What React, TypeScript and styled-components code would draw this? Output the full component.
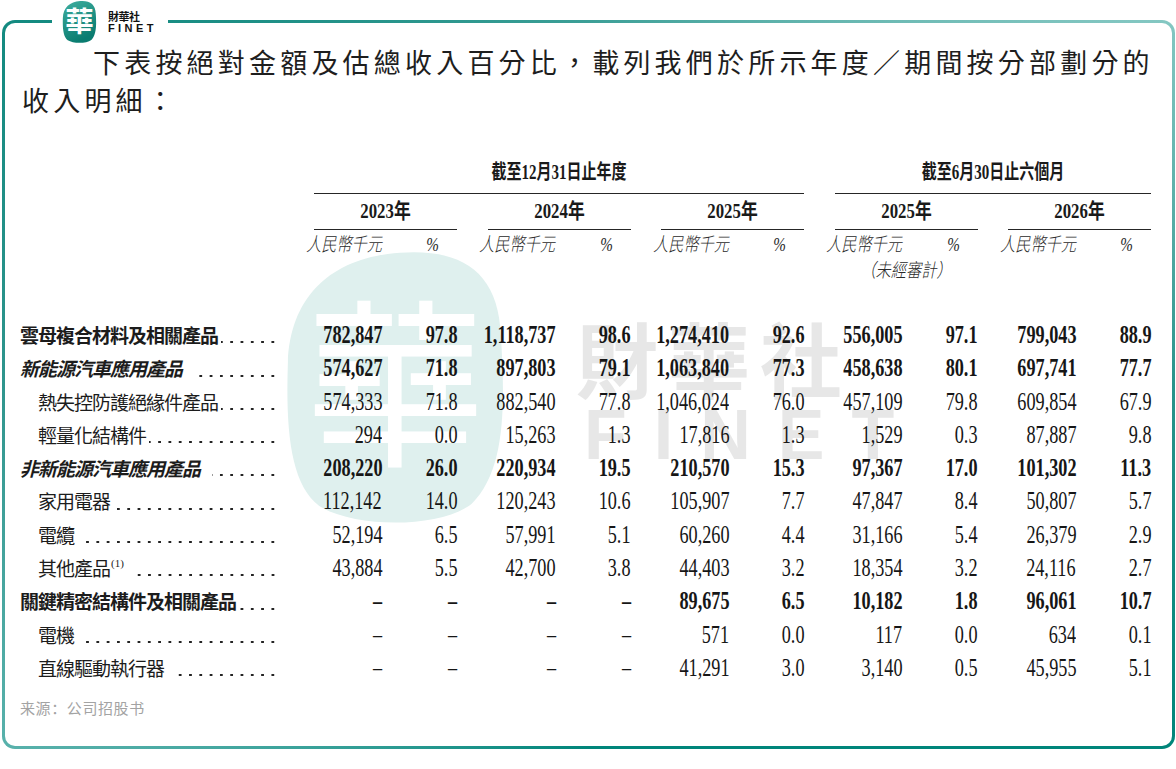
import React from "react";
import styled, { createGlobalStyle } from "styled-components";

const GlobalStyle = createGlobalStyle`
  html, body { margin: 0; padding: 0; background: #ffffff; }
  body { width: 1176px; height: 769px; overflow: hidden; }
`;

const serif = `"Liberation Serif", "Noto Sans CJK TC", serif`;
const cjk = `"Noto Sans CJK TC", "Noto Sans CJK SC", sans-serif`;
const COLS = "294px repeat(4, 68px 75px 30.5px) 68px 75px";

const Page = styled.div`
  padding: 20px 0 0 2px;
`;

const Frame = styled.div`
  position: relative;
  width: 1173px;
  height: 729px;
  box-sizing: border-box;
  padding: 3px;
  border-radius: 13px;
  background: conic-gradient(
    from 0deg at 50% 50%,
    #3c9f97 0deg,
    #84c7c2 58deg,
    #2a938b 90deg,
    #00857a 122deg,
    #00857a 180deg,
    #58b1ab 238deg,
    #2f958d 270deg,
    #138a80 302deg,
    #3c9f97 360deg
  );
`;

const Inner = styled.div`
  position: relative;
  height: 100%;
  box-sizing: border-box;
  background: #ffffff;
  border-radius: 10px;
  padding: 20px 0 0 15px;
`;

const LogoBadge = styled.div`
  position: absolute;
  left: 50px;
  top: -20px;
  width: 116px;
  height: 32px;
  background: #ffffff;
  display: flex;
  align-items: flex-start;
  z-index: 3;
`;

const LogoMark = styled.svg`
  margin-left: 10px;
  width: 35px;
  height: 43px;
  flex: none;
`;

const BrandText = styled.div`
  margin-left: 11px;
  margin-top: 10px;
  display: flex;
  flex-direction: column;
  color: #111;
`;

const BrandCn = styled.span`
  font-family: ${cjk};
  font-weight: 700;
  font-size: 11px;
  line-height: 13px;
  letter-spacing: -0.5px;
`;

const BrandEn = styled.span`
  font-family: "Liberation Sans", Arial, sans-serif;
  font-weight: 700;
  font-size: 11px;
  line-height: 11px;
  letter-spacing: 3.4px;
`;

const Watermark = styled.svg`
  position: absolute;
  left: 278px;
  top: 223px;
  width: 225px;
  height: 278px;
  z-index: 0;
`;

const WatermarkWords = styled.div`
  position: absolute;
  left: 571px;
  top: 293px;
  z-index: 0;
  color: #e7e7e7;
  display: flex;
  flex-direction: column;
`;

const WatermarkCn = styled.span`
  font-family: ${cjk};
  font-weight: 700;
  font-size: 82px;
  line-height: 82px;
  letter-spacing: 10px;
`;

const WatermarkEn = styled.span`
  margin-top: 2px;
  margin-left: 8px;
  font-family: "Liberation Sans", Arial, sans-serif;
  font-weight: 700;
  font-size: 70px;
  line-height: 70px;
  letter-spacing: 27px;
`;

const Content = styled.div`
  position: relative;
  z-index: 1;
`;

const Intro = styled.p`
  margin: 0 0 0 2px;
  font-family: ${cjk};
  font-size: 27px;
  line-height: 38px;
  letter-spacing: 4.2px;
  text-indent: 71px;
  color: #1e1e1e;
`;

const HeaderGrid = styled.div`
  margin-top: 39px;
  display: grid;
  grid-template-columns: ${COLS};
  color: #1a1a1a;
`;

const GroupCell = styled.div<{ $col: string }>`
  grid-column: ${(p) => p.$col};
  grid-row: 1;
  text-align: center;
  line-height: 28px;
  padding-bottom: 5px;
  border-bottom: 1.5px solid #262626;
`;

const YearCell = styled.div<{ $col: string }>`
  grid-column: ${(p) => p.$col};
  grid-row: 2;
  text-align: center;
  line-height: 27px;
  padding: 4px 0 3px;
  border-bottom: 1.5px solid #262626;
`;

const Squeezed = styled.span<{ $scale: number; $size: number }>`
  display: inline-block;
  font-family: ${serif};
  font-weight: 700;
  font-size: ${(p) => p.$size}px;
  transform: scaleX(${(p) => p.$scale});
  transform-origin: center;
  white-space: nowrap;
`;

const UnitCell = styled.div<{ $col: number; $row: number; $pad?: number }>`
  grid-column: ${(p) => p.$col};
  grid-row: ${(p) => p.$row};
  display: flex;
  justify-content: flex-end;
  padding-right: ${(p) => p.$pad ?? 0}px;
  padding-top: 2px;
  line-height: 26px;
  min-width: 0;
`;

const NoteCell = styled.div<{ $col: string }>`
  grid-column: ${(p) => p.$col};
  grid-row: 4;
  display: flex;
  justify-content: center;
  line-height: 26px;
`;

const UnitText = styled.span<{ $origin: string }>`
  display: inline-block;
  flex: none;
  font-family: ${serif};
  font-style: italic;
  font-weight: 300;
  font-size: 19px;
  color: #2a2a2a;
  transform: scaleX(0.8);
  transform-origin: ${(p) => p.$origin};
  white-space: nowrap;
`;

const Body = styled.div`
  margin-top: 34px;
`;

const DataRow = styled.div`
  display: grid;
  grid-template-columns: ${COLS};
  height: 33.3px;
  line-height: 33.3px;
`;

const LabelCell = styled.div<{ $indent: number }>`
  grid-column: 1;
  display: flex;
  padding-left: ${(p) => p.$indent}px;
  padding-right: 36px;
  min-width: 0;
`;

const LabelText = styled.span<{ $bold: boolean; $italic: boolean }>`
  font-family: ${cjk};
  font-size: 19px;
  letter-spacing: -1px;
  font-weight: ${(p) => (p.$bold ? 700 : 400)};
  font-style: ${(p) => (p.$italic ? "italic" : "normal")};
  color: #1c1c1c;
  white-space: nowrap;
`;

const Sup = styled.sup`
  font-family: ${serif};
  font-size: 11px;
  letter-spacing: 0;
  line-height: 0;
  vertical-align: 9px;
  margin-left: 1px;
`;

const Leader = styled.span<{ $gap: number }>`
  flex: 1;
  margin-left: ${(p) => p.$gap}px;
  background-image: radial-gradient(circle, #222 1.05px, transparent 1.5px);
  background-size: 10.3px 4px;
  background-repeat: repeat-x;
  background-position: right 0 bottom 7px;
`;

const NumCell = styled.div<{ $col: number }>`
  grid-column: ${(p) => p.$col};
  display: flex;
  justify-content: flex-end;
  min-width: 0;
  white-space: nowrap;
`;

const Num = styled.span<{ $bold: boolean }>`
  display: inline-block;
  flex: none;
  font-family: ${serif};
  font-size: 26px;
  font-weight: ${(p) => (p.$bold ? 700 : 400)};
  color: #161616;
  transform: scaleX(0.7);
  transform-origin: right center;
`;

const Source = styled.div`
  margin-top: 14px;
  font-family: "Noto Sans CJK SC", "Noto Sans CJK TC", sans-serif;
  font-size: 15px;
  line-height: 20px;
  letter-spacing: 0.6px;
  color: #a3a3a3;
`;

const BLOB =
  "M52 3 C80 1 96 12 97 40 C99 72 99 100 84 115 C70 126 32 126 16 116 C3 106 1 82 2 52 C3 22 22 5 52 3 Z";

type Row = {
  label: string;
  indent: number;
  bold: boolean;
  italic: boolean;
  gap: number;
  sup?: string;
  values: string[];
};

const D = "–";

const rows: Row[] = [
  {
    label: "雲母複合材料及相關產品",
    indent: 0,
    bold: true,
    italic: false,
    gap: 3,
    values: ["782,847", "97.8", "1,118,737", "98.6", "1,274,410", "92.6", "556,005", "97.1", "799,043", "88.9"],
  },
  {
    label: "新能源汽車應用產品",
    indent: 0,
    bold: true,
    italic: true,
    gap: 12,
    values: ["574,627", "71.8", "897,803", "79.1", "1,063,840", "77.3", "458,638", "80.1", "697,741", "77.7"],
  },
  {
    label: "熱失控防護絕緣件產品",
    indent: 18,
    bold: false,
    italic: false,
    gap: 3,
    values: ["574,333", "71.8", "882,540", "77.8", "1,046,024", "76.0", "457,109", "79.8", "609,854", "67.9"],
  },
  {
    label: "輕量化結構件",
    indent: 18,
    bold: false,
    italic: false,
    gap: 3,
    values: ["294", "0.0", "15,263", "1.3", "17,816", "1.3", "1,529", "0.3", "87,887", "9.8"],
  },
  {
    label: "非新能源汽車應用產品",
    indent: 0,
    bold: true,
    italic: true,
    gap: 12,
    values: ["208,220", "26.0", "220,934", "19.5", "210,570", "15.3", "97,367", "17.0", "101,302", "11.3"],
  },
  {
    label: "家用電器",
    indent: 18,
    bold: false,
    italic: false,
    gap: 3,
    values: ["112,142", "14.0", "120,243", "10.6", "105,907", "7.7", "47,847", "8.4", "50,807", "5.7"],
  },
  {
    label: "電纜",
    indent: 18,
    bold: false,
    italic: false,
    gap: 10,
    values: ["52,194", "6.5", "57,991", "5.1", "60,260", "4.4", "31,166", "5.4", "26,379", "2.9"],
  },
  {
    label: "其他產品",
    sup: "(1)",
    indent: 18,
    bold: false,
    italic: false,
    gap: 10,
    values: ["43,884", "5.5", "42,700", "3.8", "44,403", "3.2", "18,354", "3.2", "24,116", "2.7"],
  },
  {
    label: "關鍵精密結構件及相關產品",
    indent: 0,
    bold: true,
    italic: false,
    gap: 3,
    values: [D, D, D, D, "89,675", "6.5", "10,182", "1.8", "96,061", "10.7"],
  },
  {
    label: "電機",
    indent: 18,
    bold: false,
    italic: false,
    gap: 10,
    values: [D, D, D, D, "571", "0.0", "117", "0.0", "634", "0.1"],
  },
  {
    label: "直線驅動執行器",
    indent: 18,
    bold: false,
    italic: false,
    gap: 10,
    values: [D, D, D, D, "41,291", "3.0", "3,140", "0.5", "45,955", "5.1"],
  },
];

const years = ["2023年", "2024年", "2025年", "2025年", "2026年"];
const pairSpan = (k: number) => `${2 + 3 * k} / ${4 + 3 * k}`;

export default function App() {
  return (
    <>
      <GlobalStyle />
      <Page>
        <Frame>
          <LogoBadge>
            <LogoMark viewBox="0 0 100 124">
              <defs>
                <linearGradient id="lg" x1="0" y1="0" x2="0.4" y2="1">
                  <stop offset="0" stopColor="#3fae9f" />
                  <stop offset="1" stopColor="#0a7c70" />
                </linearGradient>
              </defs>
              <path d={BLOB} fill="url(#lg)" />
              <text
                x="50"
                y="92"
                textAnchor="middle"
                fontSize="82"
                fontWeight="700"
                fill="#ffffff"
                fontFamily='"Noto Sans CJK TC", sans-serif'
              >
                華
              </text>
            </LogoMark>
            <BrandText>
              <BrandCn>財華社</BrandCn>
              <BrandEn>FINET</BrandEn>
            </BrandText>
          </LogoBadge>
          <Inner>
            <Watermark viewBox="0 0 100 124">
              <path d={BLOB} fill="#dff0ee" />
              <text
                x="50"
                y="92"
                textAnchor="middle"
                fontSize="80"
                fontWeight="400"
                fill="#ffffff"
                fontFamily='"Noto Sans CJK TC", sans-serif'
              >
                華
              </text>
            </Watermark>
            <WatermarkWords>
              <WatermarkCn>財華社</WatermarkCn>
              <WatermarkEn>FINET</WatermarkEn>
            </WatermarkWords>
            <Content>
              <Intro>
                下表按絕對金額及估總收入百分比，載列我們於所示年度／期間按分部劃分的
                <br />
                <span>收入明細：</span>
              </Intro>
              <HeaderGrid>
                <GroupCell $col="2 / 10">
                  <Squeezed $scale={0.75} $size={20}>
                    截至12月31日止年度
                  </Squeezed>
                </GroupCell>
                <GroupCell $col="11 / 16">
                  <Squeezed $scale={0.75} $size={20}>
                    截至6月30日止六個月
                  </Squeezed>
                </GroupCell>
                {years.map((y, k) => (
                  <YearCell key={`y${k}`} $col={pairSpan(k)}>
                    <Squeezed $scale={0.8} $size={21}>
                      {y}
                    </Squeezed>
                  </YearCell>
                ))}
                {years.map((_, k) => (
                  <React.Fragment key={`u${k}`}>
                    <UnitCell $col={2 + 3 * k} $row={3}>
                      <UnitText $origin="right center">人民幣千元</UnitText>
                    </UnitCell>
                    <UnitCell $col={3 + 3 * k} $row={3} $pad={18}>
                      <UnitText $origin="right center">%</UnitText>
                    </UnitCell>
                  </React.Fragment>
                ))}
                <NoteCell $col={pairSpan(3)}>
                  <UnitText $origin="center">（未經審計）</UnitText>
                </NoteCell>
              </HeaderGrid>
              <Body>
                {rows.map((r) => (
                  <DataRow key={r.label}>
                    <LabelCell $indent={r.indent}>
                      <LabelText $bold={r.bold} $italic={r.italic}>
                        {r.label}
                        {r.sup && <Sup>{r.sup}</Sup>}
                      </LabelText>
                      <Leader $gap={r.gap} />
                    </LabelCell>
                    {r.values.map((v, i) => (
                      <NumCell key={i} $col={2 + 3 * Math.floor(i / 2) + (i % 2)}>
                        <Num $bold={r.bold}>{v}</Num>
                      </NumCell>
                    ))}
                  </DataRow>
                ))}
              </Body>
              <Source>来源：公司招股书</Source>
            </Content>
          </Inner>
        </Frame>
      </Page>
    </>
  );
}
